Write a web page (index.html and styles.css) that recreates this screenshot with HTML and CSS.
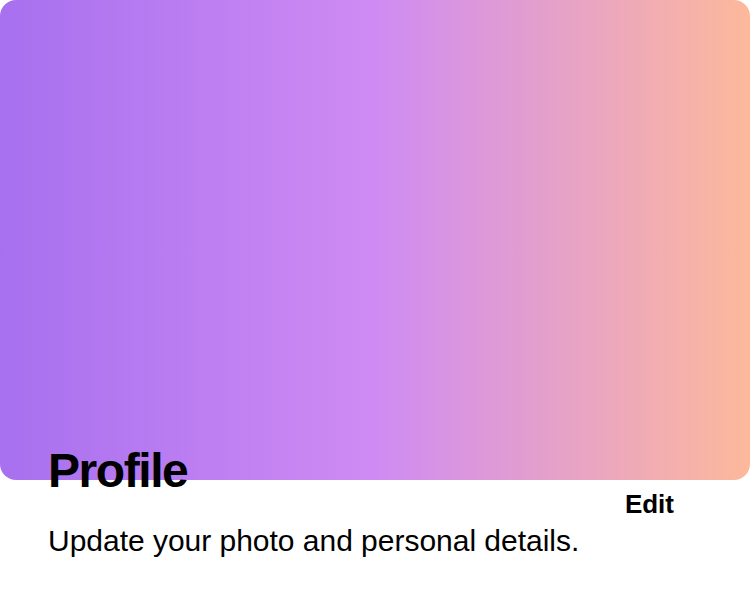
FILE: index.html
```html
<!DOCTYPE html>
<html lang="en">
<head>
<meta charset="utf-8">
<title>Profile</title>
<link rel="stylesheet" href="styles.css">
</head>
<body>
<div class="cover"></div>
<div class="header">
  <div class="text">
    <h1 class="title">Profile</h1>
    <p class="subtitle">Update your photo and personal details.</p>
  </div>
  <button class="edit" type="button">Edit</button>
</div>
</body>
</html>
```
FILE: styles.css
```css
html, body {
  margin: 0;
  padding: 0;
  background: #ffffff;
}
body {
  width: 750px;
  font-family: "Liberation Sans", Arial, sans-serif;
  color: #000;
}
.cover {
  height: 480px;
  border-radius: 16px;
  background: linear-gradient(to right, #a770ef, #cf8bf3, #fdb99b);
}
.header {
  display: flex;
  justify-content: space-between;
  align-items: flex-start;
  padding: 0 76px 0 48px;
  margin-top: -37px;
}
.text {
  display: flex;
  flex-direction: column;
}
.title {
  margin: 0;
  font-size: 48px;
  line-height: 56px;
  font-weight: 700;
  letter-spacing: -0.03em;
}
.subtitle {
  margin: 24px 0 0;
  font-size: 30px;
  line-height: 36px;
  letter-spacing: -0.02px;
}
.edit {
  margin-top: 48px;
  padding: 0;
  border: 0;
  background: none;
  font-family: inherit;
  font-size: 26px;
  line-height: 26px;
  font-weight: 700;
  color: #000;
}
```
